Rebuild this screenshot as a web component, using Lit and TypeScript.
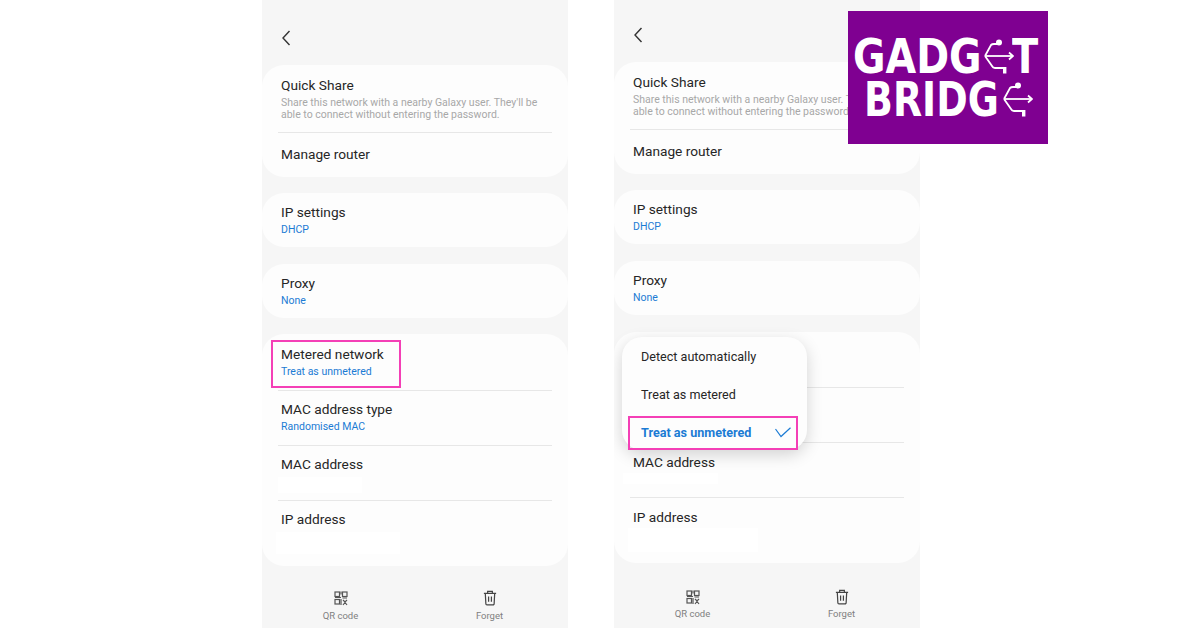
import { LitElement, html, css, svg } from "lit";
import { customElement, property } from "lit/decorators.js";

const usb = svg`<g fill="none" stroke="#fff" stroke-width="1.8"><path d="M1 19 L7 8 Q8 7 10 7 H14"/><path d="M1 19 H28"/><path d="M25 15.5 L29 19 L25 22.5"/><path d="M1 19 L8 29 Q9 31 11 31 H20"/></g>
<circle cx="15" cy="5.5" r="3" fill="#fff"/><rect x="19" y="30" width="3.4" height="6.5" fill="#fff"/>`;

@customElement("phone-screen")
class PhoneScreen extends LitElement {
  @property({ type: Boolean, reflect: true }) menu = false;

  static styles = css`
    :host {
      display: block; width: 306px; height: 628px; background: #f6f6f6; position: relative; overflow: hidden;
      font-family: Roboto, "Liberation Sans", sans-serif; color: #262626; padding-top: 65px; box-sizing: border-box;
    }
    :host([menu]) { padding-top: 62px; }
    .back { position: absolute; left: 19px; top: 29px; }
    :host([menu]) .back { top: 26px; }
    .card { background: #fdfdfd; border-radius: 22px; margin-bottom: 16px; padding: 0 16px; }
    .card.tall { margin-top: 17px; }
    :host([menu]) .card.tall { margin-bottom: 17px; }
    .row { position: relative; padding: 10px 3px 0; box-sizing: border-box; border-bottom: 1px solid #e7e7e7; height: 55px; }
    :host([menu]) .row.next { padding-top: 11px; }
    .row:last-child { border-bottom: 0; }
    .row.first { height: 57px; padding-top: 12px; }
    :host([menu]) .row.first { height: 56px; }
    .row.share { height: 68px; padding-top: 12px; }
    .row.plain { height: 44px; padding-top: 13px; }
    .row.single { height: 54px; padding-top: 11px; }
    .row.end { height: 65px; }
    .title { font-size: 13.7px; line-height: 16px; }
    .sub { font-size: 10.5px; line-height: 12px; color: #1b7bd4; margin-top: 4px; }
    .desc { font-size: 10.5px; line-height: 12px; color: #a8a8a8; margin-top: 4px; }
    .patch { position: absolute; background: #fff; }
    .bar { display: grid; grid-template-columns: 1fr 1fr; padding: 8px 4px 0; }
    :host([menu]) .bar { padding-top: 10px; }
    .action { display: flex; flex-direction: column; align-items: center; font-size: 9.5px; line-height: 11px; color: #808080; gap: 4px; }
    :host([menu]) .action { gap: 3px; }
    .action svg { display: block; }
    .drop { position: absolute; left: 8px; top: 337px; width: 185px; height: 113px; background: #fdfdfd; border-radius: 20px;
      box-shadow: 0 5px 16px rgba(0,0,0,.17); }
    .opt { height: 38px; display: flex; align-items: center; justify-content: space-between; padding: 0 16px 0 19px; font-size: 12.6px; color: #262626; }
    .opt.on { color: #1b7bd4; font-weight: 700; }
    .pink { position: absolute; border: 2.5px solid #f43fb6; box-sizing: border-box; }
    .pink.a { left: 9px; top: 340px; width: 130px; height: 48px; }
    .pink.b { left: 14px; top: 416px; width: 170px; height: 34px; }
  `;

  row(title: string, sub: string, cls = "", patch?: number[]) {
    return html`<div class="row ${cls}">
      ${title ? html`<div class="title">${title}</div>` : ""}
      ${sub ? html`<div class="sub">${sub}</div>` : ""}
      ${patch ? html`<div class="patch" style="left:${patch[0]}px;top:${patch[1]}px;width:${patch[2]}px;height:${patch[3]}px"></div>` : ""}
    </div>`;
  }

  render() {
    const mac = this.menu ? [-7, 30, 95, 11] : [0, 31, 84, 16];
    const ip = this.menu ? [-2, 30, 130, 24] : [-2, 31, 124, 22];
    return html`
      <svg class="back" width="14" height="18" viewBox="0 0 14 18"><path d="M8.5 2 L2 9 L8.5 16" fill="none" stroke="#333" stroke-width="1.4"/></svg>
      <div class="card">
        <div class="row share"><div class="title">Quick Share</div>
          <div class="desc">Share this network with a nearby Galaxy user. They'll be<br>able to connect without entering the password.</div></div>
        ${this.row("Manage router", "", "plain")}
      </div>
      <div class="card">${this.row("IP settings", "DHCP", "single")}</div>
      <div class="card tall">${this.row("Proxy", "None", "single")}</div>
      <div class="card">
        ${this.menu ? this.row("", "", "first") : this.row("Metered network", "Treat as unmetered", "first")}
        ${this.menu ? this.row("", "") : this.row("MAC address type", "Randomised MAC")}
        ${this.row("MAC address", "", "next", mac)}
        ${this.row("IP address", "", "end next", ip)}
      </div>
      <div class="bar">
        <div class="action">
          <svg width="16" height="16" viewBox="0 0 16 16" fill="none" stroke="#555" stroke-width="1.2">
            <rect x="2" y="2" width="4.5" height="4.5"/><rect x="9.5" y="2" width="4.5" height="4.5"/><rect x="2" y="9.5" width="4.5" height="4.5"/>
            <path d="M8 1.5v3M8 7.5H2M9.5 8h4.5M8 9v6M10 10l2 2l2-2M10 15l2-2.5l2 2.5"/>
          </svg>QR code
        </div>
        <div class="action">
          <svg width="16" height="16" viewBox="0 0 16 17" fill="none" stroke="#444" stroke-width="1.3">
            <path d="M1.5 3.5h13M5.5 3.5V1.5h5v2M3 3.5l.6 11a1.2 1.2 0 0 0 1.2 1.2h6.4a1.2 1.2 0 0 0 1.2-1.2L13 3.5M6.5 7v5.5M9.5 7v5.5"/>
          </svg>Forget
        </div>
      </div>
      ${this.menu ? html`
        <div class="drop">
          <div class="opt">Detect automatically</div>
          <div class="opt">Treat as metered</div>
          <div class="opt on">Treat as unmetered
            <svg width="16" height="11" viewBox="0 0 16 11"><path d="M.5 2 L6 9.5 L15.5 .8" fill="none" stroke="#1b7bd4" stroke-width="1.2"/></svg>
          </div>
        </div>
        <div class="pink b"></div>` : html`<div class="pink a"></div>`}
    `;
  }
}

@customElement("app-root")
export class AppRoot extends LitElement {
  static styles = css`
    :host { display: block; position: relative; width: 1200px; height: 628px; background: #fff; overflow: hidden; }
    .stage { display: flex; gap: 46px; padding-left: 262px; }
    .logo { position: absolute; left: 848px; top: 11px; width: 200px; height: 133px; background: #7f0091; color: #fff;
      display: flex; flex-direction: column; gap: 9px; padding: 28px 0 0 5px; box-sizing: border-box;
      font-family: "DejaVu Sans", sans-serif; font-weight: 700; font-size: 48px; line-height: 35px; }
    .line { display: flex; align-items: center; height: 35px; }
    .line.two { padding-left: 11px; margin-top: -1px; }
    .word { display: block; flex: none; transform-origin: left center; white-space: nowrap; }
    .w1 { width: 131px; transform: scaleX(.825); }
    .w2 { width: 139px; transform: scaleX(.79); }
    .w3 { width: 26px; transform: scaleX(.8); margin-left: -2px; }
    .line svg { display: block; flex: none; }
  `;
  render() {
    return html`<div class="stage"><phone-screen></phone-screen><phone-screen menu></phone-screen></div>
      <div class="logo">
        <div class="line"><span class="word w1">GADG</span><svg width="30" height="40" viewBox="0 0 30 40">${usb}</svg><span class="word w3">T</span></div>
        <div class="line two"><span class="word w2">BRIDG</span><svg width="30" height="40" viewBox="0 0 30 40">${usb}</svg></div>
      </div>`;
  }
}
